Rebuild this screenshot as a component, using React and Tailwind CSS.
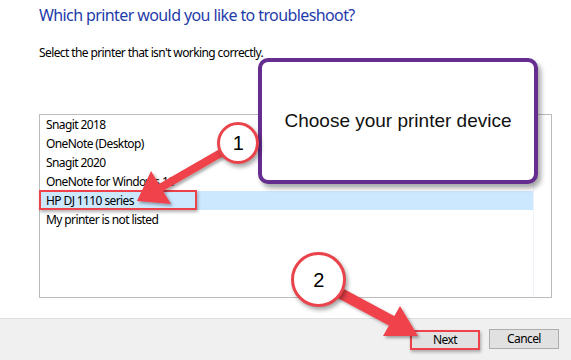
import React from 'react';

const printers = [
    'Snagit 2018',
    'OneNote (Desktop)',
    'Snagit 2020',
    'OneNote for Windows 10',
    'HP DJ 1110 series',
    'My printer is not listed',
];

const Step = ({ n, className }) => (
    <div
        className={`absolute rounded-full bg-white border-[3px] border-[#e9434b] flex items-center justify-center font-['Liberation_Sans',Arial,sans-serif] text-[20px] text-black shadow-[2px_3px_4px_rgba(0,0,0,0.35)] ${className}`}
    >
        {n}
    </div>
);

const App = () => {
    return (
        <div className="relative w-[571px] h-[360px] bg-white overflow-hidden font-['Noto_Sans',sans-serif] tracking-[-0.6px] text-black">
            <div className="flex flex-col h-full">
                <div className="flex-1 pl-[39px] pt-[3px]">
                    <h1 className="text-[16px] leading-[24px] text-[#1f3caa]">
                        Which printer would you like to troubleshoot?
                    </h1>
                    <p className="mt-[18px] text-[12px] leading-[16px]">
                        Select the printer that isn't working correctly.
                    </p>
                    <div className="mt-[53px] w-[513px] h-[184px] border border-[#bcbcbc] flex">
                        <div className="w-[494px] border-r border-[#eef3f9] flex flex-col">
                            {printers.map((p, i) => (
                                <div
                                    key={p}
                                    className={`h-[19px] pl-[6px] text-[12px] leading-[19px] whitespace-nowrap ${i === 4 ? 'bg-[#cce8ff]' : ''}`}
                                >
                                    {p}
                                </div>
                            ))}
                        </div>
                    </div>
                </div>
                <div className="h-[42px] bg-[#f0f0f0] border-t border-[#dfdfdf] flex justify-end items-start gap-[9px] pt-[10px] pr-[12px]">
                    <button className="w-[70px] h-[20px] bg-[#e1e1e1] border-[2.5px] border-[#ee4149] text-[12px] leading-none mt-[1px] shadow-[1px_2px_3px_rgba(0,0,0,0.3)]">
                        Next
                    </button>
                    <button className="w-[70px] h-[20px] bg-[#e1e1e1] border border-[#adadad] text-[12px] leading-none">
                        Cancel
                    </button>
                </div>
            </div>

            {/* highlight box around the selected row */}
            <div className="absolute left-[39px] top-[190px] w-[158px] h-[20px] border-[2.5px] border-[#ee4149] shadow-[1px_2px_3px_rgba(0,0,0,0.3)]" />

            {/* callout */}
            <div className="absolute left-[258px] top-[58px] w-[280px] h-[126px] bg-white border-4 border-[#662d91] rounded-[10px] shadow-[3px_4px_5px_rgba(0,0,0,0.35)] flex items-center justify-center">
                <span className="font-['Liberation_Sans',Arial,sans-serif] tracking-normal text-[19px] text-[#111]">
                    Choose your printer device
                </span>
            </div>

            {/* arrows */}
            <svg className="absolute inset-0 pointer-events-none" width="571" height="360" viewBox="0 0 571 360">
                <defs>
                    <filter id="sh" x="-20%" y="-20%" width="140%" height="140%">
                        <feDropShadow dx="2" dy="2" stdDeviation="1.5" floodColor="#000" floodOpacity="0.35" />
                    </filter>
                </defs>
                <g fill="#ef434b" filter="url(#sh)">
                    <line x1="226" y1="150" x2="160" y2="188" stroke="#ef434b" strokeWidth="8" />
                    <polygon points="137,201 151,171 171,204" />
                    <line x1="338" y1="292" x2="392" y2="321" stroke="#ef434b" strokeWidth="11" />
                    <polygon points="418,336 383,336 400,306" />
                </g>
            </svg>

            <Step n="1" className="left-[217px] top-[122px] w-[42px] h-[42px]" />
            <Step n="2" className="left-[291px] top-[252px] w-[55px] h-[55px]" />
        </div>
    );
};

export default App;
